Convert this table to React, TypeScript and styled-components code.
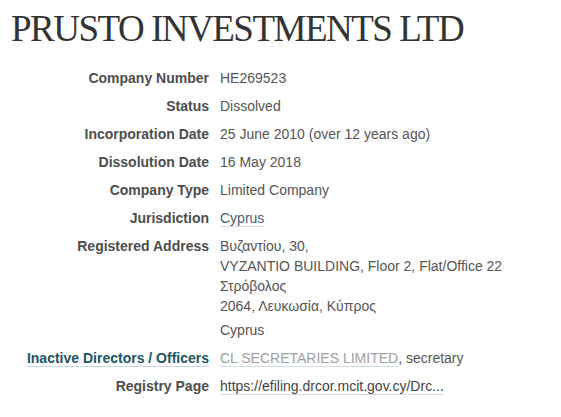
import React from 'react';
import styled, { createGlobalStyle } from 'styled-components';

const GlobalStyle = createGlobalStyle`
  body {
    margin: 0;
    background: #ffffff;
    font-family: "Liberation Sans", Arial, sans-serif;
  }
`;

const Page = styled.div`
  padding: 0 0 0 11px;
`;

const Title = styled.h1`
  margin: 0;
  padding-top: 7px;
  font-family: "Liberation Serif", "Times New Roman", serif;
  font-weight: normal;
  font-size: 37px;
  line-height: 43px;
  color: #333333;
  letter-spacing: -1.5px;
`;

const Details = styled.dl`
  display: grid;
  grid-template-columns: 198px 1fr;
  column-gap: 11px;
  row-gap: 8px;
  margin: 18px 0 0 0;
  font-size: 14px;
  line-height: 20px;
`;

const Label = styled.dt<{ $accent?: boolean }>`
  text-align: right;
  font-weight: bold;
  color: ${(p) => (p.$accent ? '#1d5466' : '#4d4d4d')};
  white-space: nowrap;
`;

const LabelLink = styled.span`
  border-bottom: 1px solid #c9d6dc;
`;

const Value = styled.dd`
  margin: 0;
  color: #555555;
`;

const Address = styled.div`
  margin-bottom: 4px;
`;

const Link = styled.a<{ $tone?: 'muted' | 'plain' | 'link' }>`
  text-decoration: none;
  border-bottom: 1px solid #cfdde4;
  color: ${(p) =>
    p.$tone === 'muted' ? '#a0a0a0' : p.$tone === 'plain' ? '#444444' : '#3f6273'};
`;

const rows: { label: string; value: React.ReactNode }[] = [
  { label: 'Company Number', value: 'HE269523' },
  { label: 'Status', value: 'Dissolved' },
  { label: 'Incorporation Date', value: '25 June 2010 (over 12 years ago)' },
  { label: 'Dissolution Date', value: '16 May 2018' },
  { label: 'Company Type', value: 'Limited Company' },
  { label: 'Jurisdiction', value: <Link href="#">Cyprus</Link> },
];

export default function App() {
  return (
    <Page>
      <GlobalStyle />
      <Title>PRUSTO INVESTMENTS LTD</Title>
      <Details>
        {rows.map((r) => (
          <React.Fragment key={r.label}>
            <Label>{r.label}</Label>
            <Value>{r.value}</Value>
          </React.Fragment>
        ))}
        <Label>Registered Address</Label>
        <Value>
          <Address>
            Βυζαντίου, 30,
            <br />
            VYZANTIO BUILDING, Floor 2, Flat/Office 22
            <br />
            Στρόβολος
            <br />
            2064, Λευκωσία, Κύπρος
          </Address>
          Cyprus
        </Value>
        <Label $accent>
          <LabelLink>Inactive Directors / Officers</LabelLink>
        </Label>
        <Value>
          <Link href="#" $tone="muted">CL SECRETARIES LIMITED</Link>, secretary
        </Value>
        <Label>Registry Page</Label>
        <Value>
          <Link href="#" $tone="plain">https://efiling.drcor.mcit.gov.cy/Drc...</Link>
        </Value>
      </Details>
    </Page>
  );
}
